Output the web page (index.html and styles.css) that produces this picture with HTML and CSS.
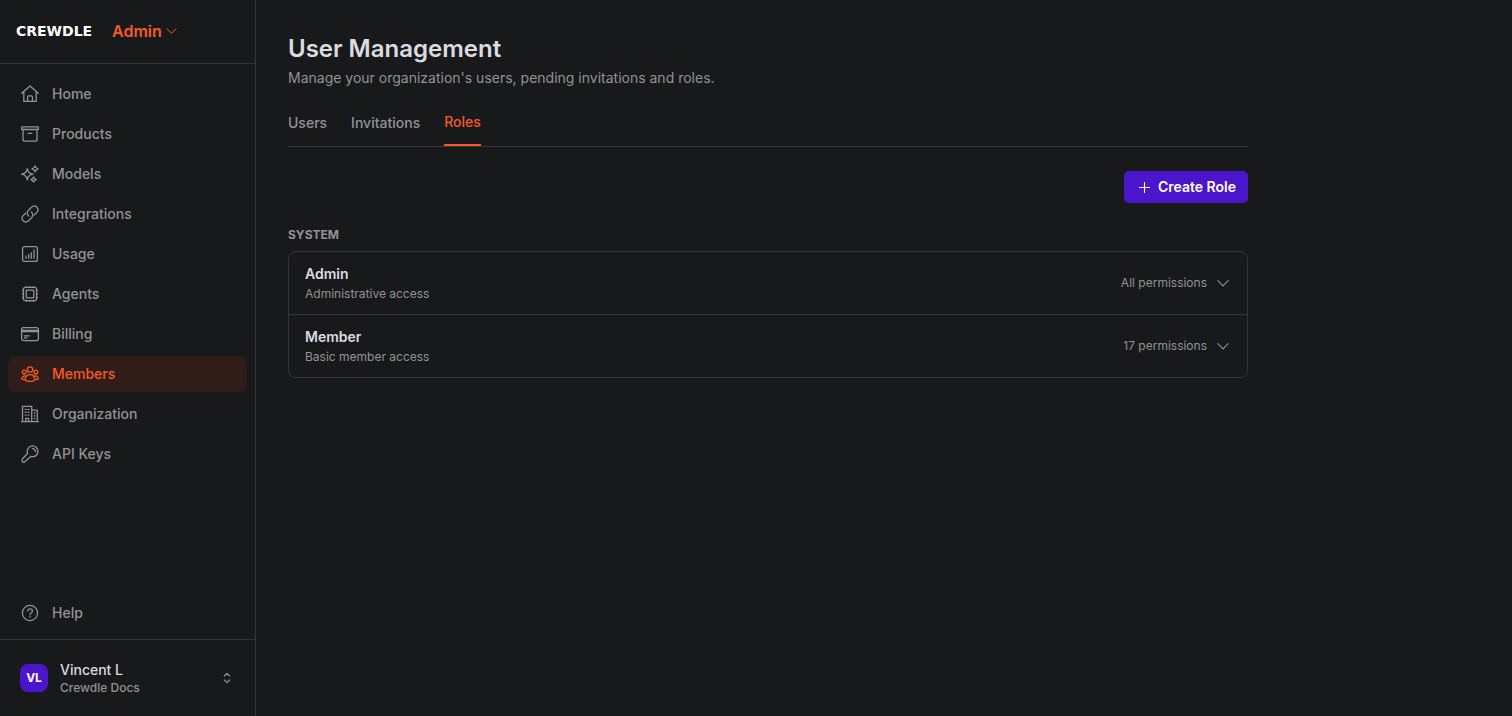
FILE: index.html
```html
<!DOCTYPE html>
<html lang="en">
  <head>
    <meta charset="UTF-8">
    <meta name="viewport" content="width=device-width, initial-scale=1">
    <title>Crewdle Admin - User Management</title>
    <link rel="stylesheet" href="styles.css">
  </head>
  <body>
    <aside class="sidebar">
      <header class="brand">
        <span class="brand-logo">CREWDLE</span>
        <button class="brand-switch" type="button">
          Admin
          <svg class="icon-brand" viewBox="0 0 12 12"><path d="M1 3.8l4.5 4.5 4.5-4.5"/></svg>
        </button>
      </header>
      <nav class="nav">
        <a class="nav-item" href="#home">
          <svg class="icon" viewBox="0 0 20 20"><path d="M1.7 9.3L10 2 18.3 9.3M3.8 7.6V17.4H16.2V7.6M7.6 17.4V13Q7.6 11.8 8.8 11.8H11.2Q12.4 11.8 12.4 13V17.4"/></svg>
          Home
        </a>
        <a class="nav-item" href="#products">
          <svg class="icon" viewBox="0 0 20 20"><rect x="1.6" y="2.9" width="16.8" height="2.6" rx=".6"/><path d="M3 5.5V15.2Q3 17.2 5 17.2H15Q17 17.2 17 15.2V5.5M8.2 9.3H11.8"/></svg>
          Products
        </a>
        <a class="nav-item" href="#models">
          <svg class="icon" viewBox="0 0 20 20"><path d="M7.3 4.6Q8.1 9.4 13 10.2 8.1 11 7.3 15.9 6.5 11 1.6 10.2 6.5 9.4 7.3 4.6zM15 1.9Q15.6 4.2 18.1 4.8 15.6 5.4 15 7.8 14.4 5.4 12 4.8 14.4 4.2 15 1.9zM13.6 13Q14.1 15.2 16.4 15.7 14.1 16.2 13.6 18.2 13.1 16.2 10.8 15.7 13.1 15.2 13.6 13z"/></svg>
          Models
        </a>
        <a class="nav-item" href="#integrations">
          <svg class="icon" viewBox="0 0 20 20"><path d="M8.6 12A3.7 3.7 0 0 1 8.3 6.5L11.9 2.9A3.7 3.7 0 0 1 17.1 8.1L14.5 10.7M11.4 8A3.7 3.7 0 0 1 11.7 13.5L8.1 17.1A3.7 3.7 0 0 1 2.9 11.9L5.5 9.3"/></svg>
          Integrations
        </a>
        <a class="nav-item" href="#usage">
          <svg class="icon" viewBox="0 0 20 20"><rect x="2.6" y="2.6" width="14.8" height="14.8" rx="2"/><path d="M6 12V14.3M8.7 10.5V14.3M11.3 8.7V14.3M14 6V14.3"/></svg>
          Usage
        </a>
        <a class="nav-item" href="#agents">
          <svg class="icon" viewBox="0 0 20 20"><rect x="3.4" y="3.4" width="13.2" height="13.2" rx="2"/><rect x="6.2" y="6.2" width="7.6" height="7.6" rx=".4"/><path d="M6.5 2.6V3.4M10 2.6V3.4M13.5 2.6V3.4M6.5 16.6V17.4M10 16.6V17.4M13.5 16.6V17.4M2.6 6.5H3.4M2.6 10H3.4M2.6 13.5H3.4M16.6 6.5H17.4M16.6 10H17.4M16.6 13.5H17.4"/></svg>
          Agents
        </a>
        <a class="nav-item" href="#billing">
          <svg class="icon" viewBox="0 0 20 20"><rect x="1.6" y="3.6" width="16.8" height="13" rx="2"/><path d="M1.6 6.4H18.4M1.6 7.6H18.4M4.3 11.8H9.5M4.3 13.9H7"/></svg>
          Billing
        </a>
        <a class="nav-item active" href="#members" aria-current="page">
          <svg class="icon" viewBox="0 0 20 20"><circle cx="10" cy="5.5" r="2.7"/><circle cx="4.2" cy="8.1" r="1.9"/><circle cx="15.8" cy="8.1" r="1.9"/><path d="M4.8 15.8C5.4 12.4 7.2 10.6 10 10.6S14.6 12.4 15.2 15.8C13.7 17.1 12 17.6 10 17.6S6.3 17.1 4.8 15.8zM5.8 12.1Q4.8 11.7 3.7 12.1 2 12.7 1.6 14.8 3 15.7 4.8 15.5M14.2 12.1Q15.2 11.7 16.3 12.1 18 12.7 18.4 14.8 17 15.7 15.2 15.5"/></svg>
          Members
        </a>
        <a class="nav-item" href="#organization">
          <svg class="icon" viewBox="0 0 20 20"><path d="M1.6 17.6H18.4M2.5 17.6V2.4H11.7V17.6M11.7 6.2H17.3V17.6M5.7 17.6V14.3H8.6V17.6"/><path d="M5.2 5.3H6.2M8 5.3H9M5.2 8.2H6.2M8 8.2H9M5.2 11.1H6.2M8 11.1H9M14.2 9H15M14.2 11.8H15M14.2 14.6H15"/></svg>
          Organization
        </a>
        <a class="nav-item" href="#api-keys">
          <svg class="icon" viewBox="0 0 20 20"><path d="M7.6 9.2A5.4 5.4 0 1 1 10.9 12.4L5 17.6Q3.7 18.5 2.4 17.6 1.5 16.3 2.4 15zM12.4 4.4Q15.2 4.8 15.6 7.6"/></svg>
          API Keys
        </a>
      </nav>
      <nav class="nav nav-help">
        <a class="nav-item" href="#help">
          <svg class="icon" viewBox="0 0 20 20"><circle cx="10" cy="10" r="7.6"/><path d="M7.8 8.1C7.8 5 12.4 5.1 12.4 7.9 12.4 9.7 10.1 9.8 10.1 11.7M10.1 13.5V14.1"/></svg>
          Help
        </a>
      </nav>
      <button class="account" type="button">
        <span class="avatar">VL</span>
        <span class="account-text">
          <span class="account-name">Vincent L</span>
          <span class="account-org">Crewdle Docs</span>
        </span>
        <svg class="icon-small" viewBox="0 0 16 16"><path d="M5.3 6l2.7-2.7 2.7 2.7M5.3 10l2.7 2.7 2.7-2.7"/></svg>
      </button>
    </aside>

    <main class="content">
      <h1>User Management</h1>
      <p class="subtitle">Manage your organization's users, pending invitations and roles.</p>
      <nav class="tabs">
        <a class="tab" href="#users">Users</a>
        <a class="tab" href="#invitations">Invitations</a>
        <a class="tab active" href="#roles" aria-current="page">Roles</a>
      </nav>
      <div class="actions">
        <button class="btn-create" type="button">
          <svg class="icon-small" viewBox="0 0 16 16"><path d="M8.5 3.5V13.5M3.5 8.5H13.5"/></svg>
          Create Role
        </button>
      </div>
      <section>
        <h2>SYSTEM</h2>
        <div class="roles">
          <button class="role" type="button" aria-expanded="false">
            <span class="role-text">
              <span class="role-name">Admin</span>
              <span class="role-desc">Administrative access</span>
            </span>
            <span class="role-count">All permissions</span>
            <svg class="icon-small" viewBox="0 0 16 16"><path d="M2.8 5.6L8 10.8l5.2-5.2"/></svg>
          </button>
          <button class="role" type="button" aria-expanded="false">
            <span class="role-text">
              <span class="role-name">Member</span>
              <span class="role-desc">Basic member access</span>
            </span>
            <span class="role-count">17 permissions</span>
            <svg class="icon-small" viewBox="0 0 16 16"><path d="M2.8 5.6L8 10.8l5.2-5.2"/></svg>
          </button>
        </div>
      </section>
    </main>
  </body>
</html>
```
FILE: styles.css
```css
:root {
  --background: #18191b;
  --border: #343536;
  --text: #dcdce0;
  --muted: #929395;
  --accent: #f75a24;
  --accent-bg: #301d19;
  --primary: #4b16cb;
}
* {
  box-sizing: border-box;
}
body {
  margin: 0;
  display: flex;
  min-height: 100vh;
  background: var(--background);
  color: var(--text);
  font-family: Inter, "Liberation Sans", sans-serif;
  font-size: 14px;
  line-height: 20px;
}
a {
  color: inherit;
  text-decoration: none;
}
button {
  margin: 0;
  border: 0;
  padding: 0;
  background: none;
  color: inherit;
  font: inherit;
  text-align: left;
  cursor: pointer;
}
svg {
  flex: none;
  fill: none;
  stroke: currentColor;
  stroke-linecap: round;
  stroke-linejoin: round;
}
.icon {
  width: 20px;
  height: 20px;
  stroke-width: 1.3;
}
.icon-small {
  width: 16px;
  height: 16px;
  stroke-width: 1.1;
}
.icon-brand {
  width: 12px;
  height: 12px;
}

/* Sidebar */
.sidebar {
  display: flex;
  flex-direction: column;
  flex: none;
  width: 256px;
  border-right: 1px solid var(--border);
}
.brand {
  display: flex;
  align-items: center;
  gap: 8px;
  height: 64px;
  padding: 0 16px 2px;
  border-bottom: 1px solid var(--border);
}
.brand-logo {
  min-width: 88px;
  color: #fff;
  font-family: "DejaVu Sans", sans-serif;
  font-size: 14px;
  font-weight: 700;
}
.brand-switch {
  display: flex;
  align-items: center;
  gap: 4px;
  color: var(--accent);
  font-size: 16px;
  font-weight: 600;
}
.nav {
  display: flex;
  flex-direction: column;
  gap: 4px;
  padding: 12px 8px;
}
.nav-help {
  margin-top: auto;
  padding: 8px;
}
.nav-item {
  display: flex;
  align-items: center;
  gap: 12px;
  padding: 8px 12px;
  border-radius: 8px;
  color: var(--muted);
  font-weight: 500;
}
.nav-item.active {
  background: var(--accent-bg);
  color: var(--accent);
}
.account {
  display: flex;
  align-items: center;
  gap: 12px;
  padding: 20px;
  border-top: 1px solid var(--border);
}
.avatar {
  width: 28px;
  height: 28px;
  border-radius: 8px;
  background: var(--primary);
  color: #fff;
  font-size: 12px;
  font-weight: 700;
  line-height: 28px;
  text-align: center;
}
.account-text {
  display: flex;
  flex-direction: column;
  flex: 1;
}
.account-name {
  font-weight: 500;
}
.account-org {
  color: var(--muted);
  font-size: 12px;
  font-weight: 500;
  line-height: 16px;
}
.account .icon-small {
  color: var(--muted);
}

/* Page */
.content {
  flex: 1;
  max-width: 1024px;
  padding: 32px;
}
h1 {
  margin: 0 0 2px;
  font-size: 24px;
  font-weight: 600;
  line-height: 34px;
}
h2 {
  margin: 24px 0 8px;
  color: var(--muted);
  font-size: 12px;
  font-weight: 700;
  line-height: 16px;
}
.subtitle {
  margin: 0 0 12px;
  color: var(--muted);
}
.tabs {
  display: flex;
  gap: 24px;
  height: 47px;
  border-bottom: 1px solid var(--border);
}
.tab {
  display: flex;
  align-items: center;
  color: var(--muted);
  font-weight: 500;
}
.tab.active {
  border-bottom: 2px solid var(--accent);
  color: var(--accent);
}
.actions {
  display: flex;
  justify-content: flex-end;
  margin-top: 24px;
}
.btn-create {
  display: flex;
  align-items: center;
  gap: 6px;
  padding: 6px 12px;
  border-radius: 5px;
  background: var(--primary);
  color: #fff;
  font-weight: 600;
}
.roles {
  border: 1px solid var(--border);
  border-radius: 8px;
}
.role {
  display: flex;
  align-items: center;
  gap: 8px;
  width: 100%;
  padding: 12px 16px;
  color: var(--muted);
}
.role + .role {
  border-top: 1px solid var(--border);
}
.role-text {
  display: flex;
  flex-direction: column;
  flex: 1;
  gap: 2px;
}
.role-name {
  color: var(--text);
  font-weight: 600;
}
.role-desc,
.role-count {
  font-size: 12px;
  line-height: 16px;
}
```
